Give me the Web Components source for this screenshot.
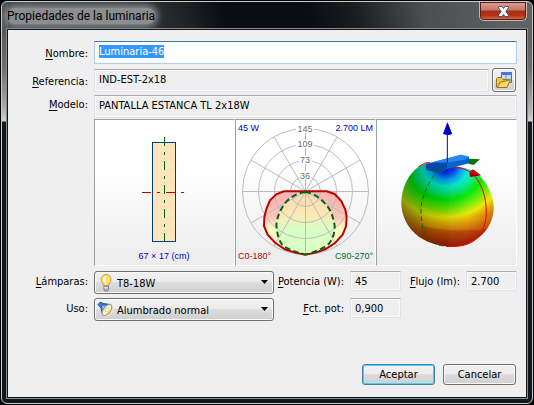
<!DOCTYPE html>
<html lang="es">
<head>
<meta charset="utf-8">
<title>Propiedades de la luminaria</title>
<style>
  html, body { height: 100%; }
  body { margin: 0; background: #000; color: #000; font: 11px/14px "DejaVu Sans Condensed", "DejaVu Sans", sans-serif; }
</style>
</head>
<body>

<template id="window-template">
  <style>
    :host { display: flex; flex-direction: column; box-sizing: border-box; min-height: 100vh; padding: 1px; background: #000; }
    .frame {
      flex: 1; display: flex; flex-direction: column; padding: 0 5px 5px; overflow: hidden;
      border: 1px solid #c9cbcc; border-radius: 6px;
      background:
        linear-gradient(#484b4e 0, #55585b 28px, #6b6c6e 65px, #a9aaab 105px, #d0d0d0 119px, #12171d 120px, #12171d) left / 6px 100% no-repeat,
        linear-gradient(#606467 0, #5e6164 28px, #6b6c6e 65px, #a9aaab 105px, #d0d0d0 119px, #12171d 120px, #12171d) right / 6px 100% no-repeat,
        linear-gradient(75deg, #3b3f42 0, #34383b 24%, #1d2226 35%, #090d14 42%, #090d14 58%, #1a1f23 67%, #4a4e51 79%, #63676a 100%) top / 100% 28px no-repeat,
        #12171d;
    }
    header { display: flex; align-items: flex-start; justify-content: space-between; height: 27px; }
    h1 {
      margin: 6px 0 0; padding: 0; font: 12px/16px Roboto, "Open Sans", sans-serif;
      border-radius: 8px; background: #8b8d8f; box-shadow: 0 0 7px 3px #8b8d8f;
    }
    button {
      display: grid; place-items: center; width: 48px; height: 19px; padding: 0;
      border: 1px solid #c3b5b2; border-top: 0; border-radius: 0 0 5px 5px;
      background: linear-gradient(#d9a397 0, #c77667 45%, #ac2b13 50%, #b5331a 75%, #d7714e 100%);
      box-shadow: inset 0 0 0 1px #5d1d13;
    }
    main { flex: 1; display: flex; flex-direction: column; border: 1px solid #10141a; outline: 1px solid #8b8e90; background: #efefef; z-index: 1; }
  </style>
  <section class="frame">
    <header>
      <h1></h1>
      <button type="button" aria-label="Cerrar">
        <svg width="13" height="11" viewBox="0 0 13 11"><path d="M1.500 .5h3.500l1.500 2L8 .5h3.500v1.300L8.900 5.500l2.600 3.700v1.300H8l-1.500-2-1.500 2H1.500V9.200l2.600-3.700L1.500 1.800z" fill="#f7f7f7" stroke="#4b5261"/></svg>
      </button>
    </header>
    <main><slot></slot></main>
  </section>
</template>

<template id="field-template">
  <style>
    :host { display: grid; grid-template-columns: var(--label-width, 79px) minmax(0, 1fr) auto; align-items: start; }
    label { justify-self: end; margin-right: 6px; padding-top: var(--label-drop, 4px); white-space: nowrap; }
    u { text-underline-offset: 2px; }
    input {
      box-sizing: border-box; width: 100%; height: var(--field-height, 23px); margin: var(--field-top, 0) 0 0; padding: 0 4px var(--field-lift, 3px); font: inherit; color: inherit;
      border: 1px solid #dfe3ea; border-top-color: #abadb3; border-radius: 1px; background: #efefef; outline: 0;
      box-shadow: inset 0 0 0 1px #f8f8f8;
    }
    :host([editable]) input { border-color: #b5cfe7; border-top-color: #3d7bad; background: #fff; }
    input::selection { background: #3399ff; color: #fff; }
  </style>
  <label for="field"></label>
  <input id="field" type="text">
  <slot></slot>
</template>

<template id="choice-template">
  <style>
    :host { display: grid; grid-template-columns: var(--label-width, 79px) minmax(0, 1fr); align-items: start; }
    label { justify-self: end; margin-right: 6px; padding-top: 4px; white-space: nowrap; }
    u { text-underline-offset: 2px; }
    .box { display: grid; grid-template-columns: 24px 1fr 14px; align-items: center; }
    select {
      grid-area: 1 / 1 / 2 / 4; appearance: none; width: 100%; height: 23px; padding: 2px 20px 0 22px; margin: 0; font: inherit; color: inherit;
      border: 1px solid #707070; border-radius: 3px; background: linear-gradient(#f2f2f2, #ebebeb 49%, #dddddd 50%, #cfcfcf);
      box-shadow: inset 0 0 0 1px #fafafa;
    }
    slot, .arrow { pointer-events: none; z-index: 1; }
    slot { display: grid; place-items: center; grid-area: 1 / 1; }
    .arrow { grid-area: 1 / 3; display: block; }
  </style>
  <label for="choice"></label>
  <div class="box">
    <select id="choice"><option></option></select>
    <slot></slot>
    <svg class="arrow" width="9" height="5" viewBox="0 0 9 5"><path d="M1 0h7L4.500 4z" fill="#000"/></svg>
  </div>
</template>

<template id="button-template">
  <style>
    :host { display: block; }
    button {
      display: grid; place-items: center; width: 100%; min-width: 73px; height: 21px; padding: 0 4px; font: inherit; color: inherit;
      border: 1px solid #707070; border-radius: 3px; background: linear-gradient(#f2f2f2, #ebebeb 49%, #dddddd 50%, #cfcfcf);
      box-shadow: inset 0 0 0 1px #fafafa;
    }
    :host([primary]) button { border-color: #3c7fb1; box-shadow: inset 0 0 0 1px #48d2f8; }
    :host([icon]) button { width: 24px; min-width: 0; height: 24px; padding: 0; }
  </style>
  <button type="button"><slot></slot></button>
</template>

<template id="panel-template">
  <style>
    :host { display: block; min-width: 0; border: 1px solid; border-color: #a0a0a0 #fff #fff #a0a0a0; background: linear-gradient(#fff 30%, #ececec); }
  </style>
  <slot></slot>
</template>

<template id="plan-template">
  <style>
    :host { display: block; }
    svg { display: block; width: 100%; }
    text { font: 9px "Liberation Sans", sans-serif; fill: #0000c8; }
  </style>
  <svg viewBox="0 0 139 145" role="img" aria-label="Planta de la luminaria">
    <rect x="57.500" y="22.500" width="23" height="99" fill="#ffe4bc" stroke="#003c80"/>
    <path d="M69.500 17v104" stroke="#006400" stroke-dasharray="9 6 3 6"/>
    <path d="M47 72.500h42" stroke="#c00000" stroke-dasharray="9 6 3 6"/>
    <text x="69" y="139" text-anchor="middle">67 × 17 (cm)</text>
  </svg>
</template>

<template id="polar-template">
  <style>
    :host { display: block; }
    svg { display: block; width: 100%; }
    text { font: 9px "Liberation Sans", sans-serif; fill: #0000c8; }
    .scale text { fill: #6e6e6e; text-anchor: middle; }
    .scale rect { fill: #fff; }
    .grid { fill: none; stroke: #bcbcbc; }
  </style>
  <svg viewBox="0 0 139 145" role="img" aria-label="Diagrama polar">
    <defs>
      <linearGradient id="outer" x1="0" y1="0" x2="0" y2="1"><stop offset=".2" stop-color="#fbb6b6"/><stop offset=".42" stop-color="#fbc8b8"/><stop offset=".6" stop-color="#ffffc4"/><stop offset="1" stop-color="#fff4c0"/></linearGradient>
      <linearGradient id="inner" x1="0" y1="0" x2="0" y2="1"><stop offset="0" stop-color="#fbd9b0"/><stop offset=".35" stop-color="#fde8b4"/><stop offset=".6" stop-color="#d8ffc4"/><stop offset="1" stop-color="#dcffc4"/></linearGradient>
    </defs>
    <g transform="translate(-2 -2) scale(.3333)">
      <path d="M150 220H278L302 228L322 249L334 275L338 298L336 325L326 350L303 375L275 393L245 404L214 410L183 404L153 394L124 375L101 350L90 324L91 298L97 273L108 247L127 229Z" fill="url(#outer)"/>
      <path d="M214 222C190 226 176 234 160 248C140 270 130 295 127 320C130 350 134 366 145 381C164 396 188 402 214 410C240 402 268 394 286 376C298 360 302 345 302 322C297 296 290 275 277 261C263 244 242 226 214 222Z" fill="url(#inner)"/>
    </g>
    <g class="grid">
      <circle cx="69.500" cy="71.500" r="63"/><circle cx="69.500" cy="71.500" r="47"/><circle cx="69.500" cy="71.500" r="31"/><circle cx="69.500" cy="71.500" r="15"/>
      <path d="M6 71.500h127M69.500 8v127M14.900 40l109.200 63M14.900 103l109.200-63M38 16.900l63 109.200M101 16.900l-63 109.200"/>
    </g>
    <g class="scale">
      <rect x="60" y="5" width="18" height="8"/><rect x="60" y="20" width="18" height="8"/><rect x="63" y="36" width="12" height="8"/><rect x="63" y="51" width="12" height="8"/>
      <text x="69" y="12">145</text><text x="69" y="27">109</text><text x="69" y="43">73</text><text x="69" y="59">36</text>
    </g>
    <g transform="translate(-2 -2) scale(.3333)" fill="none">
      <path d="M150 220H278L302 228L322 249L334 275L338 298L336 325L326 350L303 375L275 393L245 404L214 410L183 404L153 394L124 375L101 350L90 324L91 298L97 273L108 247L127 229Z" stroke="#c00000" stroke-width="6"/>
      <path d="M214 222C190 226 176 234 160 248C140 270 130 295 127 320C130 350 134 366 145 381C164 396 188 402 214 410M214 222C242 226 263 244 277 261C290 275 297 296 302 322C302 345 298 360 286 376C268 394 240 402 214 410" stroke="#006414" stroke-width="6" stroke-dasharray="17 10"/>
    </g>
    <text x="2" y="11">45 W</text>
    <text x="137" y="11" text-anchor="end">2.700 LM</text>
    <text x="2" y="139" style="fill:#c00000">C0-180°</text>
    <text x="137" y="139" text-anchor="end" style="fill:#006e1e">C90-270°</text>
  </svg>
</template>

<template id="solid-template">
  <style>
    :host { display: block; }
    svg { display: block; width: 100%; }
  </style>
  <svg viewBox="3 3 417 435" role="img" aria-label="Sólido fotométrico">
    <defs>
      <radialGradient id="heat" gradientUnits="userSpaceOnUse" cx="0" cy="0" r="1" gradientTransform="translate(210 138) rotate(-4) scale(275 248)">
        <stop offset="0" stop-color="#0008b8"/><stop offset=".1" stop-color="#0030ff"/><stop offset=".18" stop-color="#00a8f8"/><stop offset=".26" stop-color="#00f0d0"/><stop offset=".35" stop-color="#00e868"/><stop offset=".42" stop-color="#00e800"/><stop offset=".52" stop-color="#60ec00"/><stop offset=".63" stop-color="#e8e800"/><stop offset=".71" stop-color="#e0a000"/><stop offset=".83" stop-color="#c05000"/><stop offset=".97" stop-color="#a01800"/>
      </radialGradient>
      <linearGradient id="shade"><stop offset="0" stop-color="#003020" stop-opacity=".42"/><stop offset=".35" stop-color="#003000" stop-opacity=".2"/><stop offset=".7" stop-color="#000" stop-opacity="0"/></linearGradient>
      <clipPath id="ball"><path d="M128 143C150 128 180 132 214 140C254 142 286 148 307 167C334 191 350 225 353 260C354 300 337 334 309 355C286 374 256 384 222 383C190 381 157 372 130 354C96 330 75 290 76 248C78 205 96 166 128 143Z"/></clipPath>
    </defs>
    <g clip-path="url(#ball)">
      <path d="M70 120h290v270H70z" fill="url(#heat)"/>
      <path d="M70 120h290v270H70z" fill="url(#shade)"/>
      <path d="M138 260C180 285 250 300 353 292V330C290 338 190 338 134 318Z" fill="#fff000" opacity=".1"/>
      <path d="M134 318C190 338 290 338 353 325V390H134Z" fill="#901000" opacity=".2"/>
      <path d="M218 145V383H353V145Z" fill="#fff" opacity=".04"/>
    </g>
    <path d="M128 143L147 132L162 131M225 145C255 143 280 154 296 171C318 197 331 235 331 282C329 325 315 350 290 368C270 380 244 384 210 382" fill="none" stroke="#f00000" stroke-width="3"/>
    <path d="M190 153C165 173 145 215 136 255C132 295 139 335 158 363C174 374 190 380 210 382" fill="none" stroke="#007000" stroke-width="3" stroke-dasharray="14 8"/>
    <path d="M279 119L312 121L293 138L277 134Z" fill="#007800"/>
    <path d="M281 157L291 151L315 169L282 173Z" fill="#d40000"/><path d="M281 163L315 169L282 173Z" fill="#950000"/>
    <path d="M150 134L175 128L255 107L279 113V133L211 151L192 161L150 152Z" fill="#0864cc"/>
    <path d="M175 128L255 107L279 113L265 122L213 131Z" fill="#2888f0"/>
    <path d="M150 134L213 131V148L150 153Z" fill="#0048a8"/><path d="M150 153L213 147L192 161Z" fill="#104880"/>
    <path d="M214 45V131" stroke="#0000c8" stroke-width="3"/>
    <path d="M214 10L228 44Q214 51 201 44Z" fill="#0000e0"/><path d="M214 10L228 44Q221 48 214 48Z" fill="#0000a8"/>
  </svg>
</template>

<template id="glyph-template">
  <style>:host { display: block; } svg { display: none; } :host([name="folder"]) .folder, :host([name="bulb"]) .bulb, :host([name="lamp"]) .lamp { display: block; }</style>
  <svg class="folder" width="18" height="18" viewBox="0 0 18 18">
    <path d="M6.500 1.500h10v10h-10z" fill="#c4dcfa" stroke="#3f70c4"/><path d="M6 1h11v3H6z" fill="#4677dc"/><path d="M11 4v6" stroke="#6e96df"/>
    <path d="M1.500 16V7.500l1-1h4l1.500 2h5.500V11L11 16.500z" fill="#eac257" stroke="#9c7422"/>
    <path d="M2 16.500L5.500 11l5-1 5-1.500-3.500 8z" fill="#fbd668" stroke="#a17012"/>
  </svg>
  <svg class="bulb" width="16" height="18" viewBox="0 0 16 18">
    <path d="M5.500 12C5.500 9 3 8.500 3 5.500a5 5 0 0 1 10 0C13 8.500 10.500 9 10.500 12z" fill="#ffdf6a" stroke="#c79b3a"/>
    <path d="M5 6a3 3 0 0 1 4-3.500Q7 5 7.500 10Q6 8 5 6z" fill="#fffbe0"/>
    <path d="M6 12h4.500v3.500L9.500 17H7l-1-1.500z" fill="#b1b8c5" stroke="#717b90"/><path d="M6 13.800h4" stroke="#e8edf5"/>
  </svg>
  <svg class="lamp" width="18" height="17" viewBox="0 0 18 17">
    <path d="M6 15L15 6l1.500 4.500-3 4L8 16z" fill="#f7e3a0"/>
    <path d="M1 3.500L3.500 1 6 2.500l7 1L5.500 13 4 7z" fill="#3d76c3" stroke="#244f94"/><path d="M5 5l5.500-.5L6 10z" fill="#8fbcf0"/>
    <ellipse cx="10" cy="9" rx="3.500" ry="6.500" transform="rotate(38 10 9)" fill="#fff3b4" stroke="#7d97bb"/>
    <circle cx="10.200" cy="9" r="2" fill="#fffce8" stroke="#e1bd54" stroke-width=".7"/>
  </svg>
</template>

<template id="form-template">
  <style>
    :host { flex: 1; display: flex; flex-direction: column; padding: 11px 9px 12px 7px; }
    .name { margin-bottom: 4px; --label-drop: 6px; }
    .reference { margin-bottom: 3px; --label-drop: 7px; --field-top: 1px; }
    .reference push-button { margin: 0 1px 0 3px; }
    .model { --label-drop: 3px; }
    .panels { display: grid; grid-template-columns: repeat(3, 1fr); margin: 1px 0 5px 79px; }
    .values { display: grid; grid-template-columns: minmax(0, 1fr) 127px 116px; row-gap: 4px; align-items: start; }
    .values form-field { --label-width: 76px; --field-height: 20px; --field-lift: 0; --label-drop: 4px; }
    .values .flux { --label-width: 65px; }
    footer { display: flex; justify-content: flex-end; gap: 8px; margin-top: auto; padding-right: 1px; }
  </style>
  <form-field class="name" label="Nombre:" key="N" value="Luminaria-46" editable></form-field>
  <form-field class="reference" label="Referencia:" key="R" value="IND-EST-2x18"><push-button icon label="Buscar referencia"><ui-glyph name="folder"></ui-glyph></push-button></form-field>
  <form-field class="model" label="Modelo:" key="M" value="PANTALLA ESTANCA TL 2x18W"></form-field>
  <div class="panels">
    <view-panel><luminaire-plan></luminaire-plan></view-panel>
    <view-panel><polar-chart></polar-chart></view-panel>
    <view-panel><photometric-solid></photometric-solid></view-panel>
  </div>
  <div class="values">
    <choice-field label="Lámparas:" key="L" value="T8-18W"><ui-glyph name="bulb"></ui-glyph></choice-field>
    <form-field label="Potencia (W):" key="P" value="45"></form-field>
    <form-field class="flux" label="Flujo (lm):" key="F" value="2.700"></form-field>
    <choice-field label="Uso:" value="Alumbrado normal"><ui-glyph name="lamp"></ui-glyph></choice-field>
    <form-field label="Fct. pot:" key="F" value="0,900"></form-field>
  </div>
  <footer>
    <push-button primary>Aceptar</push-button>
    <push-button>Cancelar</push-button>
  </footer>
</template>

<dialog-window heading="Propiedades de la luminaria">
  <luminaire-form></luminaire-form>
</dialog-window>

<script>
  class TemplateElement extends HTMLElement {
    connectedCallback() {
      if (this.shadowRoot) return;
      const root = this.attachShadow({ mode: 'open' });
      root.append(document.getElementById(this.constructor.template).content.cloneNode(true));
      this.ready(root);
    }
    ready() {}
    fillLabel(label) {
      const text = this.getAttribute('label');
      const key = this.getAttribute('key');
      if (!key) { label.textContent = text; return; }
      const mark = document.createElement('u');
      mark.textContent = key;
      label.append(mark, text.slice(1));
    }
  }

  customElements.define('ui-glyph', class extends TemplateElement { static template = 'glyph-template'; });
  customElements.define('view-panel', class extends TemplateElement { static template = 'panel-template'; });
  customElements.define('luminaire-plan', class extends TemplateElement { static template = 'plan-template'; });
  customElements.define('polar-chart', class extends TemplateElement { static template = 'polar-template'; });
  customElements.define('photometric-solid', class extends TemplateElement { static template = 'solid-template'; });

  customElements.define('push-button', class extends TemplateElement {
    static template = 'button-template';
    ready(root) {
      if (this.hasAttribute('label')) root.querySelector('button').setAttribute('aria-label', this.getAttribute('label'));
    }
  });

  customElements.define('form-field', class extends TemplateElement {
    static template = 'field-template';
    ready(root) {
      this.fillLabel(root.querySelector('label'));
      const input = root.querySelector('input');
      input.value = this.getAttribute('value');
      input.readOnly = !this.hasAttribute('editable');
      if (!input.readOnly) { input.focus(); input.select(); }
    }
  });

  customElements.define('choice-field', class extends TemplateElement {
    static template = 'choice-template';
    ready(root) {
      this.fillLabel(root.querySelector('label'));
      root.querySelector('option').textContent = this.getAttribute('value');
    }
  });

  customElements.define('luminaire-form', class extends TemplateElement { static template = 'form-template'; });

  customElements.define('dialog-window', class extends TemplateElement {
    static template = 'window-template';
    ready(root) { root.querySelector('h1').textContent = this.getAttribute('heading'); }
  });
</script>
</body>
</html>
